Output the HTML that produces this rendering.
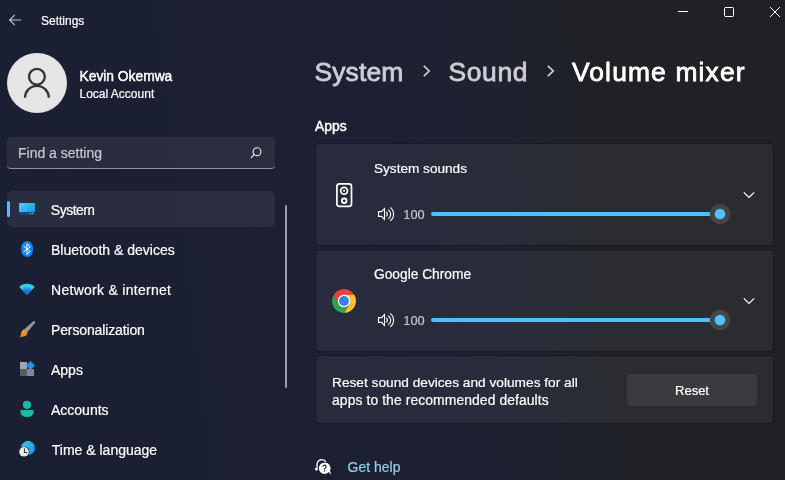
<!DOCTYPE html>
<html><head><meta charset="utf-8">
<style>
html,body{margin:0;padding:0;}
body{width:785px;height:480px;overflow:hidden;position:relative;
 background:linear-gradient(83deg,#1b1f33 0%,#1c2032 50%,#1e2130 62%,#1f2129 72%,#202125 77%,#202125 100%);
 font-family:"Liberation Sans",sans-serif;color:#fff;}
.t{position:absolute;white-space:nowrap;-webkit-text-stroke-width:0.2px;}
.abs{position:absolute;}
svg{position:absolute;overflow:visible;}
.bc{top:58.5px;font-size:26.4px;line-height:27px;}
.nav{position:absolute;left:51px;font-size:14px;line-height:14px;color:#fff;white-space:nowrap;-webkit-text-stroke-width:0.2px;}
.card{position:absolute;left:315px;width:457px;background:rgba(255,255,255,0.052);border:1px solid rgba(0,0,0,0.2);border-radius:4px;background-clip:padding-box;}
</style></head><body><div style="position:absolute;left:0;top:0;width:785px;height:480px;will-change:transform;">

<!-- title bar -->
<svg style="left:0;top:0" width="785" height="40">
 <path d="M9.6 20 H21 M14.8 14.9 L9.6 20 L14.8 25.1" fill="none" stroke="#c8c9cd" stroke-width="1.1"/>
 <path d="M678 11.5 H688" stroke="#fff" stroke-width="1"/>
 <rect x="724.5" y="7.5" width="9" height="9" rx="1" fill="none" stroke="#fff" stroke-width="1"/>
 <path d="M770 7 L780 17 M780 7 L770 17" stroke="#fff" stroke-width="1"/>
</svg>
<div class="t" style="left:41px;top:14.6px;font-size:12px;line-height:12px;">Settings</div>

<!-- avatar -->
<div class="abs" style="left:7px;top:53px;width:60px;height:60px;border-radius:50%;background:#e5e5e5;"></div>
<svg style="left:0;top:0" width="80" height="120">
 <circle cx="36.9" cy="76.7" r="7.9" fill="none" stroke="#333" stroke-width="2.3"/>
 <path d="M25 97.8 A11.9 11.9 0 0 1 48.8 97.8" fill="none" stroke="#333" stroke-width="2.3"/>
</svg>
<div class="t" style="left:79.5px;top:70.3px;font-size:13.8px;line-height:14px;-webkit-text-stroke:0.45px #fff;">Kevin Okemwa</div>
<div class="t" style="left:79.5px;top:87.5px;font-size:12px;line-height:12px;">Local Account</div>

<!-- search -->
<div class="abs" style="left:7px;top:137px;width:268px;height:31px;border-radius:4px;background:rgba(255,255,255,0.065);border-bottom:1px solid #8f9198;"></div>
<div class="t" style="left:18px;top:146.1px;font-size:14px;line-height:14px;color:#c9cad0;">Find a setting</div>
<svg style="left:0;top:0" width="300" height="180">
 <circle cx="257" cy="151.7" r="3.95" fill="none" stroke="#e6e6e6" stroke-width="1.15"/>
 <path d="M254.1 154.6 L251.2 157.6" stroke="#e6e6e6" stroke-width="1.25" stroke-linecap="round"/>
</svg>

<!-- nav -->
<div class="abs" style="left:7px;top:191px;width:268px;height:36px;border-radius:5px;background:rgba(255,255,255,0.065);"></div>
<div class="abs" style="left:7px;top:201px;width:3px;height:16px;border-radius:2px;background:#4cc2ff;"></div>
<div class="nav" style="top:203.4px;letter-spacing:-0.5px;left:50.8px">System</div>
<div class="nav" style="top:243.1px">Bluetooth &amp; devices</div>
<div class="nav" style="top:282.8px;letter-spacing:0.28px">Network &amp; internet</div>
<div class="nav" style="top:323px;letter-spacing:-0.13px">Personalization</div>
<div class="nav" style="top:363px">Apps</div>
<div class="nav" style="top:403px">Accounts</div>
<div class="nav" style="top:442.8px;left:51.8px">Time &amp; language</div>

<svg style="left:0;top:0" width="60" height="480">
 <defs>
  <linearGradient id="sysg" x1="0" y1="0" x2="1" y2="1">
   <stop offset="0" stop-color="#46d6f4"/><stop offset="1" stop-color="#1a8ee0"/>
  </linearGradient>
  <linearGradient id="wifig" x1="0" y1="0" x2="0" y2="1">
   <stop offset="0" stop-color="#3cc8f2"/><stop offset="1" stop-color="#1b8fe0"/>
  </linearGradient>
  <linearGradient id="globeg" x1="0" y1="0" x2="1" y2="1">
   <stop offset="0" stop-color="#30c8e8"/><stop offset="1" stop-color="#1080e0"/>
  </linearGradient>
  <linearGradient id="brushg" x1="0" y1="0" x2="1" y2="1">
   <stop offset="0" stop-color="#fbb52a"/><stop offset="1" stop-color="#ee6f1c"/>
  </linearGradient>
 </defs>
 <!-- system -->
 <rect x="19" y="203" width="16" height="12" rx="1" fill="url(#sysg)"/>
 <rect x="19" y="212" width="16" height="3" fill="#0f4b6e"/>
 <circle cx="30.5" cy="213.5" r="0.6" fill="#cfe"/><circle cx="32.5" cy="213.5" r="0.6" fill="#cfe"/>
 <!-- bluetooth -->
 <rect x="21.2" y="241" width="11.8" height="16" rx="5.9" ry="6.8" fill="#1283f0"/>
 <path d="M23.5 246.1 L30.2 251.4 L26.9 254.4 V243.8 L30.2 246.8 L23.5 252" fill="none" stroke="#fff" stroke-width="1"/>
 <!-- wifi -->
 <path d="M19.22 287.02 A11 11 0 0 1 34.78 287.02 L27 294.8 Z" fill="#3dc9f1"/>
 <path d="M21.7 289.5 A7.5 7.5 0 0 1 32.3 289.5 L27 294.8 Z" fill="#1f9ce3"/>
 <path d="M23.46 291.26 A5 5 0 0 1 30.54 291.26 L27 294.8 Z" fill="#1678cf"/>
 <!-- brush -->
 <path d="M33.3 321.3 Q34.3 320.6 35 321.6 Q35.3 322.3 34.8 323 L27.6 332 L24.4 329.3 Z" fill="#959ba2"/>
 <path d="M24.4 329.3 L27.6 332 C27.9 334.3 26.4 336 23.8 336.5 C22.3 336.8 20.8 336.9 19.4 336.6 C20.6 335.8 21 334.8 21.2 333.2 C21.5 331.2 22.5 329.8 24.4 329.3 Z" fill="url(#brushg)"/>
 <!-- apps -->
 <rect x="20" y="362" width="7" height="7" fill="#a3a5aa"/>
 <rect x="20" y="369" width="7" height="7" fill="#5a5b5e"/>
 <rect x="27" y="369" width="7" height="7" fill="#85878c"/>
 <path d="M30.5 361 L35 365.5 L30.5 370 L26 365.5 Z" fill="#1e95ea"/>
 <!-- accounts -->
 <circle cx="27" cy="404.8" r="4.1" fill="#1fb8a4"/>
 <path d="M20.3 411 Q20.3 410 21.3 410 H32.7 Q33.7 410 33.7 411 Q33.7 417 27 417 Q20.3 417 20.3 411 Z" fill="#1fb8a4"/>
 <!-- time -->
 <circle cx="28" cy="448" r="7" fill="url(#globeg)"/>
 <g fill="none" stroke="#6fd6f5" stroke-width="0.6" opacity="0.55">
  <ellipse cx="28" cy="448" rx="3.2" ry="7"/>
  <path d="M21.5 445.5 H34.5 M21.3 450.5 H34.7 M28 441 V455"/>
 </g>
 <circle cx="24" cy="451.8" r="5.4" fill="#1b1f33"/>
 <circle cx="24" cy="451.8" r="4.8" fill="#e8e8ea"/>
 <path d="M24.5 448.5 V452.5 H27" fill="none" stroke="#333" stroke-width="1.1"/>
</svg>

<!-- scrollbar -->
<div class="abs" style="left:285px;top:205px;width:2px;height:183px;border-radius:1px;background:#9a9ca6;"></div>

<!-- breadcrumb -->
<div class="t bc" style="left:314.5px;color:#cdced3;-webkit-text-stroke:0.8px #cdced3;letter-spacing:0.15px;">System</div>
<div class="t bc" style="left:448.5px;color:#cdced3;-webkit-text-stroke:0.8px #cdced3;letter-spacing:0.65px;">Sound</div>
<div class="t bc" style="left:572px;color:#fff;-webkit-text-stroke:0.8px #fff;letter-spacing:1.15px;">Volume mixer</div>
<svg style="left:0;top:0" width="785" height="100">
 <path d="M423.8 65.9 L429.2 71 L423.8 76.1" fill="none" stroke="#cdced3" stroke-width="1.7"/>
 <path d="M547.8 65.9 L553.2 71 L547.8 76.1" fill="none" stroke="#cdced3" stroke-width="1.7"/>
</svg>

<div class="t" style="left:315px;top:119.1px;font-size:13.9px;line-height:14px;-webkit-text-stroke:0.45px #fff;">Apps</div>

<!-- cards -->
<div class="card" style="top:143px;height:101px;"></div>
<div class="card" style="top:249px;height:101px;"></div>
<div class="card" style="top:355px;height:67px;"></div>

<div class="t" style="left:374px;top:161.7px;font-size:13.6px;line-height:14px;">System sounds</div>
<div class="t" style="left:374px;top:267.7px;font-size:13.75px;line-height:14px;">Google Chrome</div>
<div class="t" style="left:403.3px;top:207.8px;font-size:12.8px;line-height:13px;color:#c8c8ca;">100</div>
<div class="t" style="left:403.3px;top:313.7px;font-size:12.8px;line-height:13px;color:#c8c8ca;">100</div>

<svg style="left:0;top:0" width="785" height="480">
 <!-- speaker device -->
 <rect x="336.9" y="183.8" width="14.6" height="22.6" rx="2.6" fill="none" stroke="#fff" stroke-width="1.7"/>
 <circle cx="344.1" cy="190.7" r="3.4" fill="none" stroke="#fff" stroke-width="1.7"/>
 <circle cx="344.1" cy="190.7" r="1.05" fill="#fff"/>
 <circle cx="344.2" cy="200.8" r="2.3" fill="none" stroke="#fff" stroke-width="1.8"/>
 <!-- chrome -->
 <g transform="translate(344 301)">
  <path d="M0 0 L-5.37 3.1 L-10.5 -5.79 A12 12 0 0 1 10.27 -6.2 L0 -6.2 Z" fill="#e5453a"/>
  <path d="M0 0 L0 -6.2 L10.27 -6.2 A12 12 0 0 1 0.24 11.99 L5.37 3.1 Z" fill="#fbc12e"/>
  <path d="M0 0 L5.37 3.1 L0.24 11.99 A12 12 0 0 1 -10.5 -5.79 L-5.37 3.1 Z" fill="#31a24f"/>
  <circle r="6.2" fill="#fff"/>
  <circle r="5" fill="#3d7fea"/>
 </g>
 <!-- volume icons -->
 <g transform="translate(374 202)" fill="none" stroke="#fff" stroke-width="1.15">
  <path d="M4.5 9.6 H7.5 L10.5 6.7 V17.3 L7.5 14.4 H4.5 Z"/>
  <path d="M12.2 10.1 A2.5 2.5 0 0 1 12.2 14.3"/>
  <path d="M14.2 7.7 A5.3 5.3 0 0 1 14.2 16.7"/>
  <path d="M16.1 5.4 A8.3 8.3 0 0 1 16.1 18.9"/>
 </g>
 <g transform="translate(374 308)" fill="none" stroke="#fff" stroke-width="1.15">
  <path d="M4.5 9.6 H7.5 L10.5 6.7 V17.3 L7.5 14.4 H4.5 Z"/>
  <path d="M12.2 10.1 A2.5 2.5 0 0 1 12.2 14.3"/>
  <path d="M14.2 7.7 A5.3 5.3 0 0 1 14.2 16.7"/>
  <path d="M16.1 5.4 A8.3 8.3 0 0 1 16.1 18.9"/>
 </g>
 <!-- sliders -->
 <rect x="431" y="212" width="289" height="4" rx="2" fill="#4cc2ff"/>
 <circle cx="720" cy="214" r="10.3" fill="#454548"/>
 <circle cx="720" cy="214" r="5.3" fill="#4cc2ff"/>
 <rect x="431" y="318" width="289" height="4" rx="2" fill="#4cc2ff"/>
 <circle cx="720" cy="320" r="10.3" fill="#454548"/>
 <circle cx="720" cy="320" r="5.3" fill="#4cc2ff"/>
 <!-- chevrons -->
 <path d="M743.8 192.3 L749 197.5 L754.2 192.3" fill="none" stroke="#fff" stroke-width="1.2"/>
 <path d="M743.8 298.3 L749 303.5 L754.2 298.3" fill="none" stroke="#fff" stroke-width="1.2"/>
 <!-- help icon -->
 <path d="M325.8 461.9 C324.2 458.9 319 458.6 317.4 462.6 C316.8 464.2 316.9 466 317.3 467.8" fill="none" stroke="#fff" stroke-width="1.3"/>
 <circle cx="316.4" cy="468.9" r="1.5" fill="#fff"/>
 <path d="M324.5 462.7 A5.6 5.6 0 1 0 328.6 472.1 L331.2 474.8 L330 470.9 A5.6 5.6 0 0 0 324.5 462.7 Z" fill="#fff"/>
 <path d="M322.9 466.5 C322.9 464.6 326.1 464.6 326.1 466.5 C326.1 467.8 324.5 467.9 324.5 469.4" fill="none" stroke="#1d2030" stroke-width="1.2"/>
 <circle cx="324.5" cy="471.1" r="0.75" fill="#1d2030"/>
</svg>

<!-- reset card -->
<div class="t" style="left:332px;top:375.9px;font-size:13.7px;line-height:14px;">Reset sound devices and volumes for all</div>
<div class="t" style="left:332px;top:393.1px;font-size:13.9px;line-height:14px;letter-spacing:0.09px;">apps to the recommended defaults</div>
<div class="abs" style="left:627px;top:374px;width:130px;height:32px;border-radius:4px;background:rgba(255,255,255,0.07);"></div>
<div class="t" style="left:627px;width:130px;text-align:center;top:383.6px;font-size:13px;line-height:14px;">Reset</div>

<div class="t" style="left:347.6px;top:459.8px;font-size:14px;line-height:14px;color:#8fd3ec;">Get help</div>

</div></body></html>
